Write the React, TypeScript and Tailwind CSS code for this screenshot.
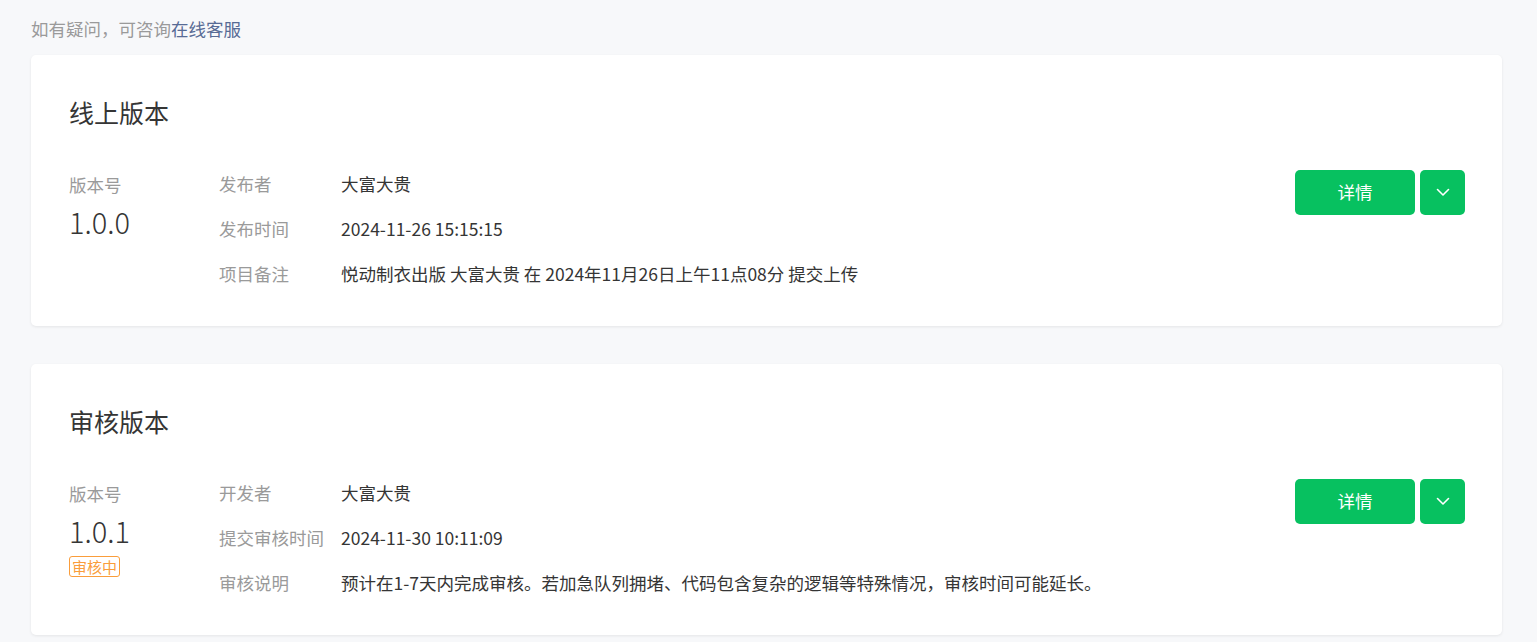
import React from 'react';

interface Row {
  label: string;
  value: string;
}

interface VersionCardProps {
  title: string;
  version: string;
  rows: Row[];
  badge?: string;
}

const Chevron = () => (
  <svg width="16" height="16" viewBox="0 0 16 16" fill="none">
    <path d="M2.5 5.5 8 11l5.5-5.5" stroke="#fff" strokeWidth="1.6" strokeLinecap="round" strokeLinejoin="round" />
  </svg>
);

const VersionCard: React.FC<VersionCardProps> = ({ title, version, rows, badge }) => {
  return (
    <div className="bg-white rounded-[5px] shadow-[0_1px_3px_rgba(0,0,0,0.08)] pt-[45px] pb-[29px] pl-[38px] pr-[37px]">
      <h2 className="text-[25px] leading-[25px] text-[#353535] font-normal">{title}</h2>
      <div className="flex mt-[37px]">
        <div className="w-[150px] shrink-0">
          <div className="h-[45px] leading-[45px] text-[#9a9a9a]">版本号</div>
          <div className="text-[29px] leading-[28px] font-light text-[#353535]">{version}</div>
          {badge && (
            <span className="inline-block mt-[12px] h-[21px] px-[2px] leading-[19px] text-[15px] text-[#fa9d3b] border border-[#fa9d3b] rounded-[3px]">
              {badge}
            </span>
          )}
        </div>
        <div className="flex-1">
          {rows.map((row) => (
            <div key={row.label} className="flex h-[45px] items-center">
              <span className="w-[122px] shrink-0 text-[#9a9a9a]">{row.label}</span>
              <span className="text-[#353535]">{row.value}</span>
            </div>
          ))}
        </div>
        <div className="flex gap-[5px] mt-[7.5px] h-[45px]">
          <button className="w-[120px] h-[45px] rounded-[5px] bg-[#07c160] text-white text-[17.5px]">详情</button>
          <button className="w-[45px] h-[45px] rounded-[5px] bg-[#07c160] flex items-center justify-center">
            <Chevron />
          </button>
        </div>
      </div>
    </div>
  );
};

export default function App() {
  return (
    <div
      className="min-h-screen bg-[#f7f8fa] pl-[31px] pr-[35px] text-[17.5px]"
      style={{ fontFamily: '"Noto Sans CJK SC", "Noto Sans", sans-serif' }}
    >
      <div className="pt-[20px] leading-[18px] text-[#9a9a9a] mb-[17px]">
        如有疑问，可咨询<a className="text-[#576b95]">在线客服</a>
      </div>
      <div className="flex flex-col gap-[38px]">
        <VersionCard
          title="线上版本"
          version="1.0.0"
          rows={[
            { label: '发布者', value: '大富大贵' },
            { label: '发布时间', value: '2024-11-26 15:15:15' },
            { label: '项目备注', value: '悦动制衣出版 大富大贵 在 2024年11月26日上午11点08分 提交上传' },
          ]}
        />
        <VersionCard
          title="审核版本"
          version="1.0.1"
          badge="审核中"
          rows={[
            { label: '开发者', value: '大富大贵' },
            { label: '提交审核时间', value: '2024-11-30 10:11:09' },
            { label: '审核说明', value: '预计在1-7天内完成审核。若加急队列拥堵、代码包含复杂的逻辑等特殊情况，审核时间可能延长。' },
          ]}
        />
      </div>
    </div>
  );
}
